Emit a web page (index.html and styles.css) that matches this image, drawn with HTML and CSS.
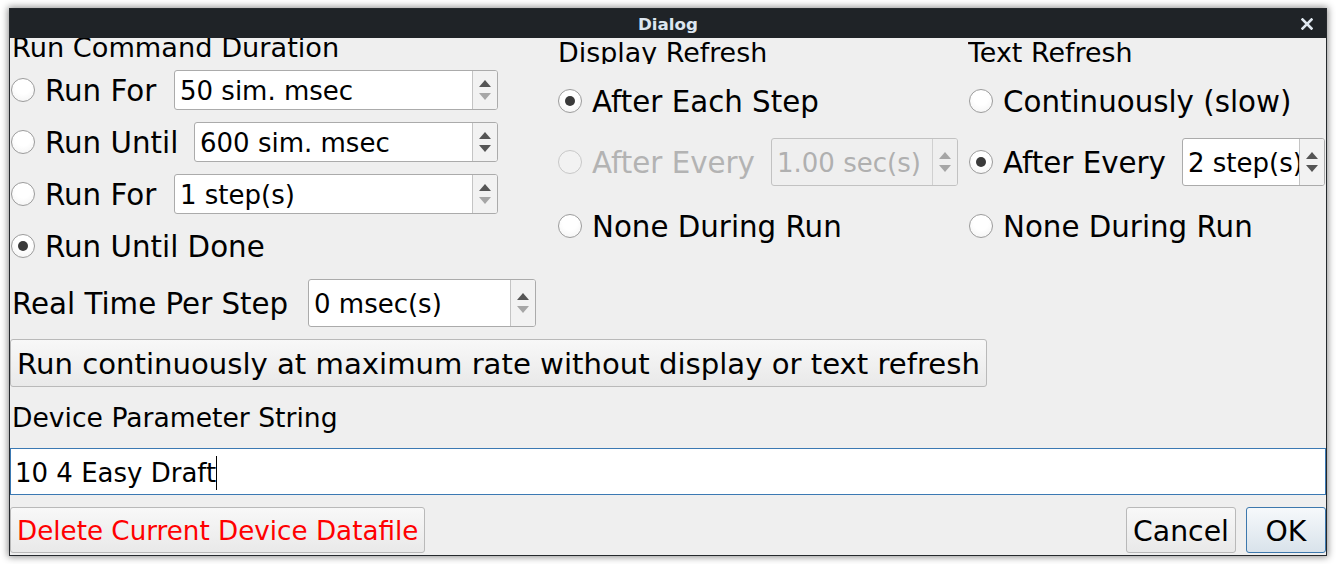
FILE: index.html
```html
<!DOCTYPE html>
<html>
<head>
<meta charset="utf-8">
<link rel="stylesheet" href="styles.css">
</head>
<body>
<div class="window">
  <div class="titlebar">
    <span class="title">Dialog</span>
    <svg class="close" width="12" height="12" viewBox="0 0 12 12"><path d="M1.5 1.5 L10.5 10.5 M10.5 1.5 L1.5 10.5" stroke="#dfe7ef" stroke-width="2.6" stroke-linecap="square"/></svg>
  </div>
  <div class="content">
    <div class="top">
      <div class="col col1">
        <div class="hdr hdr1">Run Command Duration</div>
        <div class="row row-a">
          <span class="radio r-edge"></span><span class="lbl">Run For</span>
          <div class="spinner sp-w1"><span class="sp-text">50 sim. msec</span><span class="sp-btns"><span class="half up"><i class="arr-up"></i></span><span class="half dn"><i class="arr-dn off"></i></span></span></div>
        </div>
        <div class="row row-a">
          <span class="radio r-edge"></span><span class="lbl">Run Until</span>
          <div class="spinner sp-w2"><span class="sp-text">600 sim. msec</span><span class="sp-btns"><span class="half up"><i class="arr-up"></i></span><span class="half dn"><i class="arr-dn"></i></span></span></div>
        </div>
        <div class="row row-a">
          <span class="radio r-edge"></span><span class="lbl">Run For</span>
          <div class="spinner sp-w1"><span class="sp-text">1 step(s)</span><span class="sp-btns"><span class="half up"><i class="arr-up"></i></span><span class="half dn"><i class="arr-dn off"></i></span></span></div>
        </div>
        <div class="row row-a">
          <span class="radio r-edge checked"></span><span class="lbl">Run Until Done</span>
        </div>
        <div class="row row-real">
          <span class="lbl lbl-real">Real Time Per Step</span>
          <div class="spinner tall sp-w3"><span class="sp-text">0 msec(s)</span><span class="sp-btns"><span class="half up"><i class="arr-up"></i></span><span class="half dn"><i class="arr-dn off"></i></span></span></div>
        </div>
      </div>
      <div class="col col2">
        <div class="hdr hdr2">Display Refresh</div>
        <div class="row rr1">
          <span class="radio checked"></span><span class="lbl">After Each Step</span>
        </div>
        <div class="row rr2">
          <span class="radio disabled"></span><span class="lbl dis">After Every</span>
          <div class="spinner tall disabled sp-w4"><span class="sp-text">1.00 sec(s)</span><span class="sp-btns"><span class="half up"><i class="arr-up off"></i></span><span class="half dn"><i class="arr-dn off"></i></span></span></div>
        </div>
        <div class="row rr3">
          <span class="radio"></span><span class="lbl">None During Run</span>
        </div>
      </div>
      <div class="col col3">
        <div class="hdr hdr2">Text Refresh</div>
        <div class="row rr1">
          <span class="radio r-edge"></span><span class="lbl">Continuously (slow)</span>
        </div>
        <div class="row rr2">
          <span class="radio r-edge checked"></span><span class="lbl">After Every</span>
          <div class="spinner tall sp-w5"><span class="sp-text">2 step(s)</span><span class="sp-btns"><span class="half up"><i class="arr-up"></i></span><span class="half dn"><i class="arr-dn"></i></span></span></div>
        </div>
        <div class="row rr3">
          <span class="radio r-edge"></span><span class="lbl">None During Run</span>
        </div>
      </div>
    </div>
    <div class="btn wide">Run continuously at maximum rate without display or text refresh</div>
    <div class="plabel">Device Parameter String</div>
    <div class="textfield"><span class="tf-text">10 4 Easy Draft</span><span class="caret"></span></div>
    <div class="bottom">
      <div class="btn danger">Delete Current Device Datafile</div>
      <div class="spacer"></div>
      <div class="btn cancel">Cancel</div>
      <div class="btn ok">OK</div>
    </div>
  </div>
</div>
</body>
</html>
```
FILE: styles.css
```css
html, body {
  margin: 0;
  padding: 0;
  background: #ffffff;
}
body {
  font-family: "DejaVu Sans", "Liberation Sans", sans-serif;
  color: #000;
  width: 1336px;
  height: 564px;
  overflow: hidden;
}
.window {
  margin: 8px 0 0 9px;
  width: 1318px;
  height: 548px;
  box-sizing: border-box;
  border: 1px solid #25292d;
  background: #efefef;
  display: flex;
  flex-direction: column;
  box-shadow: 0 0 7px 1px rgba(0, 0, 0, 0.45);
}
.titlebar {
  height: 29px;
  flex: none;
  background: #1f2327;
  display: flex;
  align-items: center;
  justify-content: center;
  position: relative;
}
.title {
  font-weight: bold;
  font-size: 16.7px;
  color: #dde6ef;
  margin-top: 1px;
}
.close {
  position: absolute;
  right: 13px;
  top: 9px;
}
.content {
  flex: 1;
  overflow: hidden;
  display: flex;
  flex-direction: column;
  align-items: flex-start;
}
.top {
  display: grid;
  grid-template-columns: 548px 410px 358px;
  height: 289px;
}
.col {
  display: flex;
  flex-direction: column;
}
.hdr {
  white-space: nowrap;
  overflow: hidden;
}
.hdr1 {
  font-size: 27.2px;
  height: 20px;
  line-height: 20px;
  margin-left: 2px;
  margin-bottom: 12px;
}
.hdr2 {
  font-size: 26.9px;
  height: 26px;
  line-height: 29.7px;
}
.row {
  display: flex;
  align-items: center;
  height: 40px;
  white-space: nowrap;
}
.row-a {
  width: 488px;
  margin-bottom: 12px;
}
.row-a:nth-child(5) {
  margin-bottom: 13px;
}
.row-real {
  width: 526px;
  height: 48px;
}
.col2 .row, .col3 .row { width: 100%; }
.col2 .row.rr2 { width: 400px; }
.col3 .row.rr2 { width: 357px; }
.rr1 { margin-top: 17px; }
.rr2 { margin-top: 17px; height: 48px; }
.rr3 { margin-top: 20px; }

.lbl {
  font-size: 29.3px;
  margin-left: 10px;
  padding-top: 2px;
}
.lbl-real {
  margin-left: 2px;
}
.lbl.dis { color: #b3b3b3; }

.radio {
  flex: none;
  width: 22px;
  height: 22px;
  border-radius: 50%;
  border: 1px solid #9c9c9c;
  background: radial-gradient(circle at 50% 35%, #ffffff 40%, #f1f1f1 100%);
  position: relative;
}
.r-edge { margin-left: 1px; }
.radio.checked::after {
  content: "";
  position: absolute;
  left: 6px;
  top: 6px;
  width: 10px;
  height: 10px;
  border-radius: 50%;
  background: #3a3a3a;
}
.radio.disabled {
  border-color: #c8c8c8;
  background: #f2f2f2;
}

.spinner {
  margin-left: auto;
  height: 40px;
  box-sizing: border-box;
  border: 1px solid #ababab;
  border-radius: 3px;
  background: #fff;
  display: flex;
  overflow: hidden;
}
.spinner.tall { height: 48px; }
.sp-w1 { width: 324px; }
.sp-w2 { width: 304px; }
.sp-w3 { width: 228px; }
.sp-w4 { width: 187px; }
.sp-w5 { width: 143px; }
.sp-text {
  flex: 1;
  font-size: 26px;
  padding-left: 5px;
  padding-top: 2px;
  display: flex;
  align-items: center;
  overflow: hidden;
}
.spinner.disabled { background: #efefef; border-color: #c2c2c2; }
.spinner.disabled .sp-text { color: #b0b0b0; }
.sp-btns {
  flex: none;
  width: 24px;
  border-left: 1px solid #c4c4c4;
  background: #f2f2f2;
  display: flex;
  flex-direction: column;
}
.spinner.disabled .sp-btns { border-left-color: #d0d0d0; background: #efefef; }
.half {
  flex: 1;
  display: flex;
  justify-content: center;
}
.half.up { align-items: flex-end; padding-bottom: 3px; }
.half.dn { align-items: flex-start; padding-top: 3px; }
.arr-up {
  width: 0;
  height: 0;
  border-left: 6px solid transparent;
  border-right: 6px solid transparent;
  border-bottom: 7px solid #555555;
}
.arr-dn {
  width: 0;
  height: 0;
  border-left: 6px solid transparent;
  border-right: 6px solid transparent;
  border-top: 7px solid #555555;
}
.arr-up.off { border-bottom-color: #a6a6a6; }
.arr-dn.off { border-top-color: #a6a6a6; }

.btn {
  box-sizing: border-box;
  border: 1px solid #b9b9b9;
  border-radius: 3px;
  background: linear-gradient(#f8f8f8, #e9e9e9);
  display: flex;
  align-items: center;
  white-space: nowrap;
}
.wide {
  margin-top: 12px;
  width: 977px;
  height: 48px;
  font-size: 29.15px;
  padding-left: 6px;
  padding-top: 2px;
}
.plabel {
  font-size: 26.6px;
  height: 40px;
  line-height: 40px;
  margin: 11px 0 10px 2px;
  white-space: nowrap;
}
.textfield {
  width: 1316px;
  height: 47px;
  box-sizing: border-box;
  border: 1px solid #3b79b3;
  background: #fff;
  display: flex;
  align-items: center;
  padding-left: 4px;
  padding-top: 2px;
}
.tf-text {
  font-size: 26px;
  white-space: nowrap;
}
.caret {
  width: 1px;
  height: 34px;
  background: #000;
  margin-left: 0;
}
.bottom {
  margin-top: 12px;
  width: 1316px;
  height: 46px;
  display: flex;
  gap: 10px;
}
.spacer { flex: 1; }
.danger {
  width: 415px;
  height: 46px;
  color: #ff0000;
  font-size: 26.2px;
  padding-left: 6px;
  padding-top: 2px;
}
.cancel {
  width: 110px;
  height: 46px;
  font-size: 28.3px;
  justify-content: center;
  padding-top: 2px;
}
.ok {
  width: 80px;
  height: 46px;
  font-size: 28.3px;
  justify-content: center;
  padding-top: 2px;
  border-color: #3d78ad;
  background: linear-gradient(#f6f9fb, #d9e3eb);
}
```
